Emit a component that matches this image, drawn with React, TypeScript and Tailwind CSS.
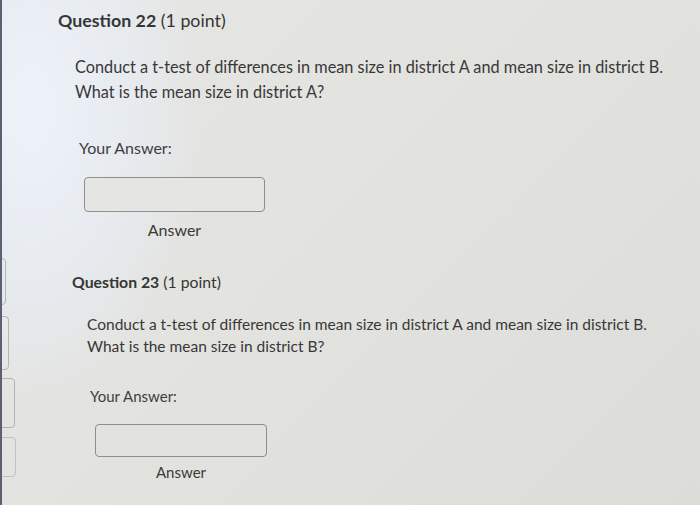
export default function App() {
  return (
    <div
      className="relative w-[700px] h-[505px] overflow-hidden border-l-2 border-[#5b6170] text-[#363636]"
      style={{
        fontFamily: 'Lato, "Open Sans", sans-serif',
        background:
          'radial-gradient(ellipse 170px 300px at 30px 110px, rgba(238,243,251,0.95) 0%, rgba(232,238,246,0.7) 55%, rgba(228,228,226,0) 100%), linear-gradient(135deg, #e6e6e3 0%, #e2e2df 50%, #dcdcd8 100%)',
      }}
    >
      {/* sidebar fragments at the left edge */}
      <div className="absolute -left-3 top-[258px] h-[47px] w-[16px] rounded border border-[#b4b6b4]" />
      <div className="absolute -left-3 top-[316px] h-[54px] w-[19px] rounded border border-[#b4b6b4]" />
      <div className="absolute -left-3 top-[378px] h-[50px] w-[25px] rounded border border-[#b0b2b0]" />
      <div className="absolute -left-3 top-[437px] h-[40px] w-[26px] rounded border border-[#c0c2c0]" />

      <div className="flex flex-col">
        <section>
          <h2 className="ml-[56px] mt-[8px] text-[17.8px] leading-[24px]">
            <span className="font-bold">Question 22</span> (1 point)
          </h2>
          <p className="ml-[73px] mt-[22px] text-[16.3px] leading-[25px] text-[#383838]">
            Conduct a t-test of differences in mean size in district A and mean size in district B.
            <br />
            What is the mean size in district A?
          </p>
          <p className="ml-[77px] mt-[33px] text-[16px] leading-[22px] text-[#3e3e3e]">Your Answer:</p>
          <div className="ml-[82px] mt-[18px] flex w-[181px] flex-col items-center">
            <div className="h-[35px] w-full rounded-[4px] border border-[#8e8f8d] bg-[#e5e6e3]" />
            <span className="mt-[7px] text-[16px] leading-[22px] text-[#3a3a3a]">Answer</span>
          </div>
        </section>

        <section>
          <h2 className="ml-[70px] mt-[30px] text-[15.8px] leading-[22px]">
            <span className="font-bold">Question 23</span> (1 point)
          </h2>
          <p className="ml-[85px] mt-[20px] text-[15.5px] leading-[22px] text-[#383838]">
            Conduct a t-test of differences in mean size in district A and mean size in district B.
            <br />
            What is the mean size in district B?
          </p>
          <p className="ml-[88px] mt-[28px] text-[15px] leading-[22px] text-[#3e3e3e]">Your Answer:</p>
          <div className="ml-[93px] mt-[17px] flex w-[172px] flex-col items-center">
            <div className="h-[33px] w-full rounded-[4px] border border-[#8e8f8d] bg-[#e2e2df]" />
            <span className="mt-[4px] text-[15px] leading-[22px] text-[#3a3a3a]">Answer</span>
          </div>
        </section>
      </div>
    </div>
  );
}
